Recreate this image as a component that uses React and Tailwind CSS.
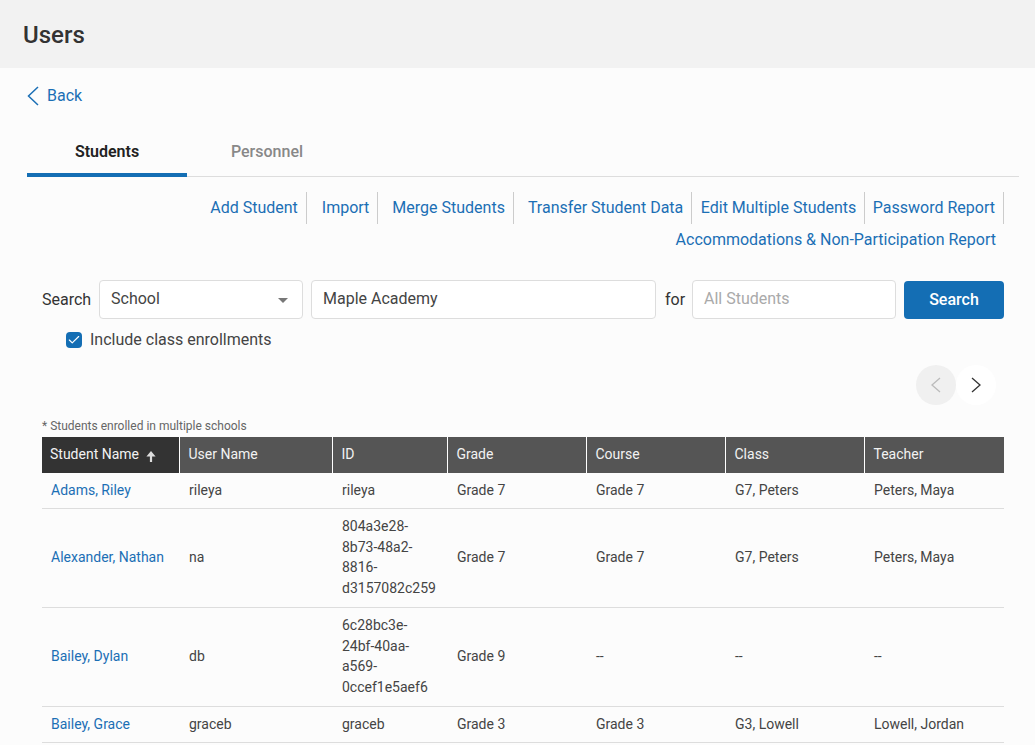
import React from 'react';
import { Check } from 'lucide-react';

const links = [
  { label: 'Add Student', cls: 'pl-0 pr-2' },
  { label: 'Import', cls: 'pl-[15px] pr-2' },
  { label: 'Merge Students', cls: 'pl-[14px] pr-2' },
  { label: 'Transfer Student Data', cls: 'pl-[14px] pr-[7.5px]' },
  { label: 'Edit Multiple Students', cls: 'pl-[9px] pr-[7.5px]' },
  { label: 'Password Report', cls: 'pl-2 pr-2' },
];

const columns = [
  { label: 'Student Name', width: 'w-[137px]' },
  { label: 'User Name', width: 'w-[153px]' },
  { label: 'ID', width: 'w-[115px]' },
  { label: 'Grade', width: 'w-[139px]' },
  { label: 'Course', width: 'w-[139px]' },
  { label: 'Class', width: 'w-[139px]' },
  { label: 'Teacher', width: 'w-[140px]' },
];

const rows = [
  { name: 'Adams, Riley', user: 'rileya', id: ['rileya'], grade: 'Grade 7', course: 'Grade 7', cls: 'G7, Peters', teacher: 'Peters, Maya' },
  { name: 'Alexander, Nathan', user: 'na', id: ['804a3e28-', '8b73-48a2-', '8816-', 'd3157082c259'], grade: 'Grade 7', course: 'Grade 7', cls: 'G7, Peters', teacher: 'Peters, Maya' },
  { name: 'Bailey, Dylan', user: 'db', id: ['6c28bc3e-', '24bf-40aa-', 'a569-', '0ccef1e5aef6'], grade: 'Grade 9', course: '--', cls: '--', teacher: '--' },
  { name: 'Bailey, Grace', user: 'graceb', id: ['graceb'], grade: 'Grade 3', course: 'Grade 3', cls: 'G3, Lowell', teacher: 'Lowell, Jordan' },
];

function Chevron({ dir, className }) {
  const points = dir === 'left' ? '9,1 1,8 9,15' : '1,1 9,8 1,15';
  return (
    <svg viewBox="0 0 10 16" className={className} fill="none" stroke="currentColor" strokeWidth="1.3">
      <polyline points={points} />
    </svg>
  );
}

export default function App() {
  return (
    <div className="h-screen overflow-hidden bg-[#fcfcfc] font-['Roboto',sans-serif] text-[#333333]">
      <header className="flex h-[68px] items-center bg-[#f2f2f2] pl-[23px] pt-[2px]">
        <h1 className="text-2xl font-medium leading-8 text-[#333333]">Users</h1>
      </header>

      <a className="ml-[27px] mt-[16px] flex h-6 items-center text-base text-[#1b6fb5]">
        <svg viewBox="0 0 12 20" className="h-5 w-3" fill="none" stroke="currentColor" strokeWidth="1.5">
          <polyline points="11,1 1.5,10 11,19" />
        </svg>
        <span className="ml-2">Back</span>
      </a>

      <div className="ml-[27px] mr-4 mt-[20px] flex h-[49px] border-b border-[#dddddd]">
        <div className="flex h-[49px] w-40 items-center justify-center border-b-4 border-[#146eb4] pt-[2px] text-base font-semibold text-[#222222]">
          Students
        </div>
        <div className="flex h-[48px] w-40 items-center justify-center text-base font-medium text-[#888888]">
          Personnel
        </div>
      </div>

      <div className="ml-auto mr-[31px] mt-[15px] flex w-[900px] flex-wrap justify-end">
        {links.map((link) => (
          <a key={link.label} className={`h-8 border-r border-[#cccccc] text-base leading-[32px] text-[#1b6fb5] ${link.cls}`}>
            {link.label}
          </a>
        ))}
        <a className="h-8 pr-2 text-base leading-[32px] text-[#1b6fb5]">
          Accommodations &amp; Non-Participation Report
        </a>
      </div>

      <div className="ml-[42px] mr-[31px] mt-[24px] flex items-center text-base">
        <span className="w-[57px]">Search</span>
        <div className="flex h-[39px] w-[204px] items-center justify-between rounded border border-[#dddddd] bg-white pb-[2px] pl-[11px] pr-[14px] text-[#444444]">
          <span>School</span>
          <span className="mt-[3px] h-0 w-0 border-x-[5px] border-t-[5px] border-x-transparent border-t-[#777777]" />
        </div>
        <div className="ml-2 flex h-[39px] w-[345px] items-center rounded border border-[#dddddd] bg-white pb-[2px] pl-[11px] text-[#444444]">
          Maple Academy
        </div>
        <span className="ml-[9px] w-[27px]">for</span>
        <div className="flex h-[39px] w-[204px] items-center rounded border border-[#dddddd] bg-white pb-[2px] pl-[11px] text-[#aaaaaa]">
          All Students
        </div>
        <button className="ml-2 h-[38px] w-[100px] rounded-sm bg-[#146eb4] font-medium text-white">Search</button>
      </div>

      <label className="ml-[66px] mt-[12px] flex h-[18px] items-center text-base text-[#444444]">
        <span className="flex h-4 w-4 items-center justify-center rounded-sm bg-[#146eb4]">
          <Check size={14} strokeWidth={2} className="text-white" />
        </span>
        <span className="ml-2">Include class enrollments</span>
      </label>

      <div className="mr-[39px] mt-[16px] flex justify-end">
        <button className="flex h-10 w-10 items-center justify-center rounded-full bg-[#f0f0f0] text-[#bbbbbb]">
          <Chevron dir="left" className="h-4 w-[10px]" />
        </button>
        <button className="flex h-10 w-10 items-center justify-center rounded-full bg-white text-[#333333]">
          <Chevron dir="right" className="h-4 w-[10px]" />
        </button>
      </div>

      <p className="ml-[42px] mt-[14px] h-[18px] text-xs leading-[15px] text-[#666666]">* Students enrolled in multiple schools</p>

      <table className="ml-[42px] w-[962px] table-fixed border-collapse text-sm">
        <thead>
          <tr className="h-9 text-left text-[#f2f2f2]">
            {columns.map((col, i) => (
              <th
                key={col.label}
                className={`${col.width} px-0 pb-[2px] font-normal ${i === 0 ? 'bg-[#333333]' : 'bg-[#555555]'} ${i < 6 ? 'border-r border-white' : ''}`}
              >
                <span className={`flex items-center ${i === 0 ? 'pl-2' : 'pl-[9px]'}`}>
                  {col.label}
                  {i === 0 && (
                    <svg viewBox="0 0 10 12" className="ml-[7px] mt-[5px] h-[11px] w-[10px]" fill="#dddddd">
                      <polygon points="5,0 10,6 6.2,6 6.2,12 3.8,12 3.8,6 0,6" />
                    </svg>
                  )}
                </span>
              </th>
            ))}
          </tr>
        </thead>
        <tbody>
          {rows.map((row) => {
            const multi = row.id.length > 1;
            const cell = `pl-[10px] leading-[19px] ${multi ? 'pb-[2px]' : ''}`;
            return (
              <tr key={row.name} className="border-b border-[#dddddd] text-[#444444]">
                <td className={`pl-[9px] pt-2 leading-[19px] text-[#1b6fb5] ${multi ? 'pb-[10px]' : 'pb-2'}`}>{row.name}</td>
                <td className={cell}>{row.user}</td>
                <td className={`pl-[10px] ${multi ? 'pb-[9px] pt-[7px] leading-[20.5px]' : 'py-2 leading-[19px]'}`}>
                  {row.id.map((part) => (
                    <div key={part}>{part}</div>
                  ))}
                </td>
                <td className={cell}>{row.grade}</td>
                <td className={cell}>{row.course}</td>
                <td className={cell}>{row.cls}</td>
                <td className={cell}>{row.teacher}</td>
              </tr>
            );
          })}
        </tbody>
      </table>
    </div>
  );
}
